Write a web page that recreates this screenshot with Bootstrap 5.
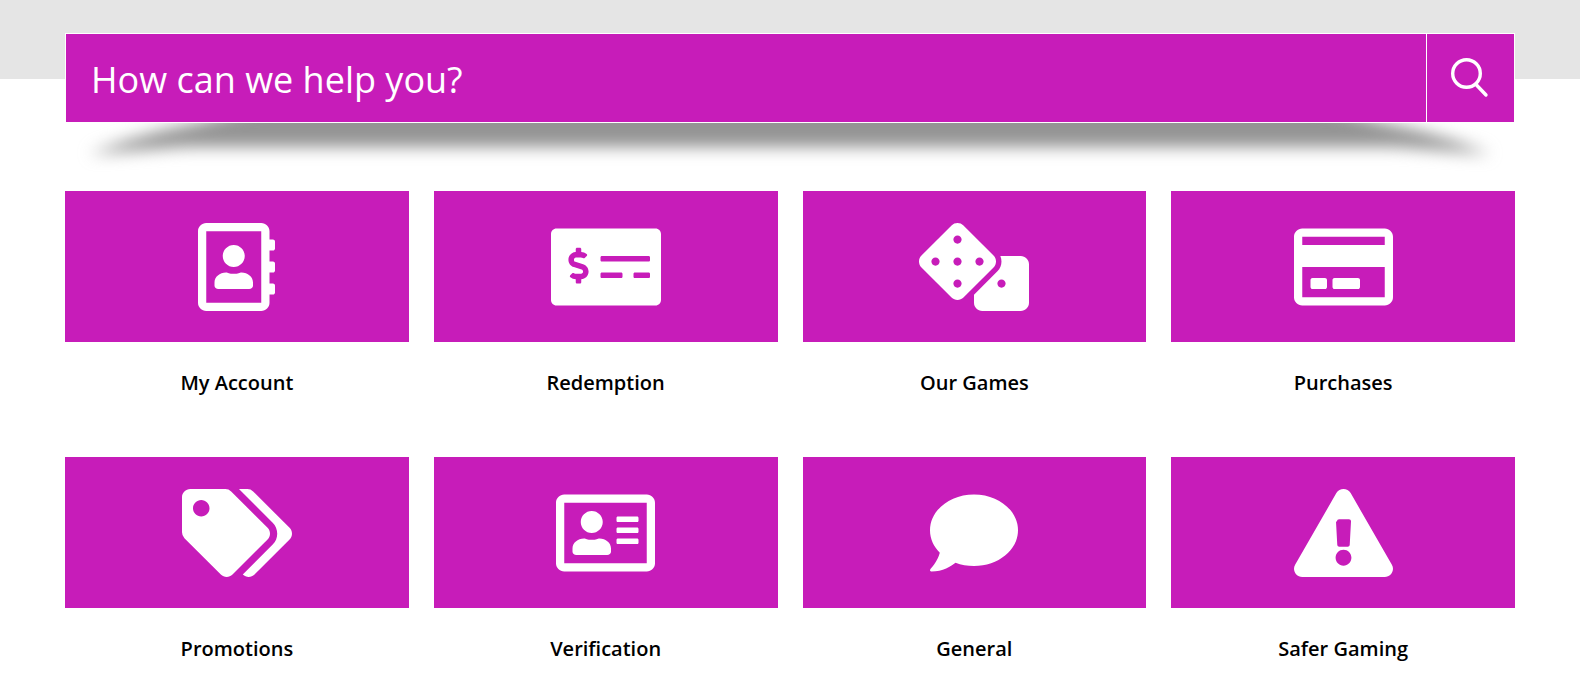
<!DOCTYPE html>
<html lang="en">
<head>
<meta charset="utf-8">
<meta name="viewport" content="width=device-width, initial-scale=1">
<title>Help Center</title>
<link href="https://cdn.jsdelivr.net/npm/bootstrap@5.3.0/dist/css/bootstrap.min.css" rel="stylesheet">
<style>
  :root { --brand: #c71cb9; }
  body { font-family: "Segoe UI", "Open Sans", "Noto Sans", sans-serif; background: #fff; }
  .page-wrap { padding: 0 65px; }
  .hero { background: linear-gradient(#e5e5e5, #e5e5e5) top / 100% 79px no-repeat; padding-top: 33px; }
  .search-wrap { position: relative; z-index: 0; }
  .search-shade { position: absolute; z-index: -1; left: 24px; right: 24px; bottom: -31px; height: 49px; filter: blur(8px); }
  .search-shade::before {
    content: ""; display: block; height: 100%; background: #949494;
    clip-path: polygon(0 49px, 36px 36px, 71px 26px, 111px 17px, 175px 0,
      calc(100% - 175px) 0, calc(100% - 111px) 17px, calc(100% - 71px) 26px, calc(100% - 36px) 36px, 100% 49px,
      calc(100% - 96px) 42px, 96px 42px);
  }
  .search-bar { border: 1px solid #fff; background: var(--brand); height: 90px; }
  .search-bar .form-control { font-size: 36px; line-height: 50px; color: #fff; padding: 4px 25px 0; }
  .search-bar .form-control::placeholder { color: #fff; opacity: 1; }
  .search-bar .btn { width: 88px; border-left: 1px solid #fff; }
  .topics { --bs-gutter-x: 25px; margin-top: 68px; }
  .topic { color: #000; }
  .topic-icon { background: var(--brand); height: 151px; }
  .topic-icon svg { height: 88px; fill: #fff; }
  .topic-name { font-size: 20px; line-height: 30px; font-weight: 600; margin: 26px 0 59px; }
</style>
</head>
<body>
<header class="hero page-wrap">
  <div class="search-wrap">
    <div class="search-shade"></div>
    <form class="search-bar d-flex" role="search">
      <input type="search" class="form-control flex-grow-1 border-0 rounded-0 bg-transparent shadow-none" placeholder="How can we help you?" aria-label="How can we help you?">
      <button type="button" class="btn flex-shrink-0 border-top-0 border-end-0 border-bottom-0 rounded-0 p-0" aria-label="Search">
        <svg width="40" height="40" viewBox="0 0 40 40" fill="none" stroke="#fff" stroke-width="3.400" stroke-linecap="round"><circle cx="15.500" cy="15.500" r="13.800"/><path d="M25.500 27L35 37"/></svg>
      </button>
    </form>
  </div>
</header>
<main class="page-wrap">
  <div class="row row-cols-4 topics">
    <div class="col"><a class="topic d-block text-center text-decoration-none" href="#">
      <div class="topic-icon d-flex align-items-center justify-content-center"><svg viewBox="0 0 448 512" aria-hidden="true"><path d="M436 160c6.600 0 12-5.400 12-12v-40c0-6.600-5.400-12-12-12h-20V48c0-26.500-21.500-48-48-48H48C21.500 0 0 21.500 0 48v416c0 26.500 21.500 48 48 48h320c26.500 0 48-21.500 48-48v-48h20c6.600 0 12-5.400 12-12v-40c0-6.600-5.400-12-12-12h-20v-64h20c6.600 0 12-5.400 12-12v-40c0-6.600-5.400-12-12-12h-20v-64h20zm-68 304H48V48h320v416zM208 256c35.300 0 64-28.700 64-64s-28.700-64-64-64-64 28.700-64 64 28.700 64 64 64zm-89.600 128h179.200c12.400 0 22.400-8.600 22.400-19.200v-19.200c0-31.800-30.100-57.600-67.200-57.600-10.800 0-18.700 8-44.800 8-26.900 0-33.400-8-44.800-8-37.100 0-67.200 25.800-67.200 57.600v19.200c0 10.600 10 19.200 22.400 19.200z"/></svg></div>
      <h2 class="topic-name">My Account</h2></a></div>
    <div class="col"><a class="topic d-block text-center text-decoration-none" href="#">
      <div class="topic-icon d-flex align-items-center justify-content-center"><svg viewBox="0 0 640 512" aria-hidden="true"><path d="M608 32H32C14.330 32 0 46.330 0 64v384c0 17.670 14.330 32 32 32h576c17.670 0 32-14.330 32-32V64c0-17.670-14.330-32-32-32zM176 327.880V344c0 4.420-3.580 8-8 8h-16c-4.420 0-8-3.580-8-8v-16.290c-11.290-.58-22.270-4.520-31.370-11.350-3.900-2.930-4.100-8.770-.57-12.140l11.750-11.210c2.770-2.640 6.890-2.760 10.130-.73 3.870 2.420 8.260 3.720 12.820 3.720h28.110c6.500 0 11.800-5.920 11.800-13.190 0-5.950-3.610-11.190-8.770-12.730l-45-13.500c-18.590-5.580-31.580-23.420-31.580-43.390 0-24.520 19.050-44.440 42.670-45.070V152c0-4.420 3.580-8 8-8h16c4.420 0 8 3.580 8 8v16.290c11.290.58 22.270 4.510 31.370 11.350 3.900 2.930 4.100 8.770.57 12.140l-11.750 11.210c-2.770 2.640-6.890 2.760-10.130.73-3.870-2.430-8.260-3.720-12.820-3.720h-28.110c-6.500 0-11.800 5.920-11.800 13.190 0 5.950 3.610 11.190 8.770 12.730l45 13.500c18.590 5.580 31.580 23.420 31.580 43.390 0 24.530-19.050 44.440-42.670 45.070zM416 312c0 4.420-3.580 8-8 8H296c-4.420 0-8-3.580-8-8v-16c0-4.420 3.580-8 8-8h112c4.420 0 8 3.580 8 8v16zm160 0c0 4.420-3.580 8-8 8h-80c-4.420 0-8-3.580-8-8v-16c0-4.420 3.580-8 8-8h80c4.420 0 8 3.580 8 8v16zm0-96c0 4.420-3.580 8-8 8H296c-4.420 0-8-3.580-8-8v-16c0-4.420 3.580-8 8-8h272c4.420 0 8 3.580 8 8v16z"/></svg></div>
      <h2 class="topic-name">Redemption</h2></a></div>
    <div class="col"><a class="topic d-block text-center text-decoration-none" href="#">
      <div class="topic-icon d-flex align-items-center justify-content-center"><svg viewBox="0 0 640 512" aria-hidden="true"><path d="M592 192H473.260c12.690 29.590 7.120 65.200-17 89.320L320 417.580V464c0 26.510 21.490 48 48 48h224c26.510 0 48-21.490 48-48V240c0-26.510-21.490-48-48-48zM480 376c-13.250 0-24-10.750-24-24 0-13.260 10.750-24 24-24s24 10.740 24 24c0 13.250-10.750 24-24 24zm-46.370-186.700L258.700 14.370c-19.160-19.160-50.230-19.160-69.390 0L14.370 189.300c-19.160 19.160-19.160 50.230 0 69.390L189.300 433.630c19.160 19.160 50.230 19.160 69.390 0L433.630 258.700c19.160-19.170 19.160-50.240 0-69.400zM96 248c-13.250 0-24-10.750-24-24 0-13.260 10.750-24 24-24s24 10.740 24 24c0 13.250-10.750 24-24 24zm128 128c-13.250 0-24-10.750-24-24 0-13.260 10.750-24 24-24s24 10.740 24 24c0 13.250-10.750 24-24 24zm0-128c-13.250 0-24-10.750-24-24 0-13.260 10.750-24 24-24s24 10.740 24 24c0 13.250-10.750 24-24 24zm0-128c-13.250 0-24-10.750-24-24 0-13.260 10.750-24 24-24s24 10.740 24 24c0 13.250-10.750 24-24 24zm128 128c-13.250 0-24-10.750-24-24 0-13.260 10.750-24 24-24s24 10.740 24 24c0 13.250-10.750 24-24 24z"/></svg></div>
      <h2 class="topic-name">Our Games</h2></a></div>
    <div class="col"><a class="topic d-block text-center text-decoration-none" href="#">
      <div class="topic-icon d-flex align-items-center justify-content-center"><svg viewBox="0 0 576 512" aria-hidden="true"><path d="M527.900 32H48.100C21.500 32 0 53.500 0 80v352c0 26.500 21.500 48 48.100 48h479.800c26.600 0 48.100-21.500 48.100-48V80c0-26.500-21.500-48-48.100-48zM48 80h480v48H48zM528 432H48V256h480zM192 332v40c0 6.600-5.400 12-12 12h-72c-6.600 0-12-5.400-12-12v-40c0-6.600 5.400-12 12-12h72c6.600 0 12 5.400 12 12zm192 0v40c0 6.600-5.400 12-12 12H236c-6.600 0-12-5.400-12-12v-40c0-6.600 5.400-12 12-12h136c6.600 0 12 5.400 12 12z" fill-rule="evenodd"/></svg></div>
      <h2 class="topic-name">Purchases</h2></a></div>
    <div class="col"><a class="topic d-block text-center text-decoration-none" href="#">
      <div class="topic-icon d-flex align-items-center justify-content-center"><svg viewBox="0 0 640 512" aria-hidden="true"><path d="M497.941 225.941L286.059 14.059A48 48 0 0 0 252.118 0H48C21.490 0 0 21.490 0 48v204.118a48 48 0 0 0 14.059 33.941l211.882 211.882c18.744 18.745 49.136 18.746 67.882 0l204.118-204.118c18.745-18.745 18.745-49.137 0-67.882zM112 160c-26.510 0-48-21.490-48-48s21.490-48 48-48 48 21.490 48 48-21.490 48-48 48zm513.941 133.823L421.823 497.941c-18.745 18.745-49.137 18.745-67.882 0l-.36-.36L527.640 323.522c16.999-16.999 26.360-39.600 26.360-63.640s-9.362-46.641-26.360-63.640L331.397 0h48.721a48 48 0 0 1 33.941 14.059l211.882 211.882c18.745 18.745 18.745 49.137 0 67.882z"/></svg></div>
      <h2 class="topic-name">Promotions</h2></a></div>
    <div class="col"><a class="topic d-block text-center text-decoration-none" href="#">
      <div class="topic-icon d-flex align-items-center justify-content-center"><svg viewBox="0 0 576 512" aria-hidden="true"><path d="M528 32H48C21.500 32 0 53.500 0 80v352c0 26.500 21.500 48 48 48h480c26.500 0 48-21.500 48-48V80c0-26.500-21.500-48-48-48zm0 400H48V80h480v352zM208 256c35.300 0 64-28.700 64-64s-28.700-64-64-64-64 28.700-64 64 28.700 64 64 64zm-89.600 128h179.200c12.400 0 22.400-8.600 22.400-19.200v-19.200c0-31.800-30.100-57.600-67.200-57.600-10.800 0-18.700 8-44.800 8-26.900 0-33.400-8-44.800-8-37.100 0-67.200 25.800-67.200 57.600v19.200c0 10.600 10 19.200 22.400 19.200zM360 320h112c4.400 0 8-3.600 8-8v-16c0-4.400-3.600-8-8-8H360c-4.400 0-8 3.600-8 8v16c0 4.400 3.600 8 8 8zm0-64h112c4.400 0 8-3.600 8-8v-16c0-4.400-3.600-8-8-8H360c-4.400 0-8 3.600-8 8v16c0 4.400 3.600 8 8 8zm0-64h112c4.400 0 8-3.600 8-8v-16c0-4.400-3.600-8-8-8H360c-4.400 0-8 3.600-8 8v16c0 4.400 3.600 8 8 8z"/></svg></div>
      <h2 class="topic-name">Verification</h2></a></div>
    <div class="col"><a class="topic d-block text-center text-decoration-none" href="#">
      <div class="topic-icon d-flex align-items-center justify-content-center"><svg viewBox="0 0 512 512" aria-hidden="true"><path d="M256 32C114.600 32 0 125.100 0 240c0 49.600 21.400 95 57 130.700C44.500 421.100 2.700 466 2.200 466.500c-2.200 2.300-2.800 5.700-1.500 8.700S4.800 480 8 480c66.300 0 116-31.800 140.600-51.400 32.700 12.300 69 19.400 107.400 19.400 141.400 0 256-93.100 256-208S397.400 32 256 32z"/></svg></div>
      <h2 class="topic-name">General</h2></a></div>
    <div class="col"><a class="topic d-block text-center text-decoration-none" href="#">
      <div class="topic-icon d-flex align-items-center justify-content-center"><svg viewBox="0 0 576 512" aria-hidden="true"><path d="M569.517 440.013C587.975 472.007 564.806 512 527.940 512H48.054c-36.937 0-59.999-40.055-41.577-71.987L246.423 23.985c18.467-32.009 64.720-31.951 83.154 0l239.940 416.028zM288 354c-25.405 0-46 20.595-46 46s20.595 46 46 46 46-20.595 46-46-20.595-46-46-46zm-43.673-165.346l7.418 136c.347 6.364 5.609 11.346 11.982 11.346h48.546c6.373 0 11.635-4.982 11.982-11.346l7.418-136c.375-6.874-5.098-12.654-11.982-12.654h-57.383c-6.884 0-12.356 5.780-11.981 12.654z"/></svg></div>
      <h2 class="topic-name">Safer Gaming</h2></a></div>
  </div>
</main>
<script src="https://cdn.jsdelivr.net/npm/bootstrap@5.3.0/dist/js/bootstrap.bundle.min.js"></script>
</body>
</html>
